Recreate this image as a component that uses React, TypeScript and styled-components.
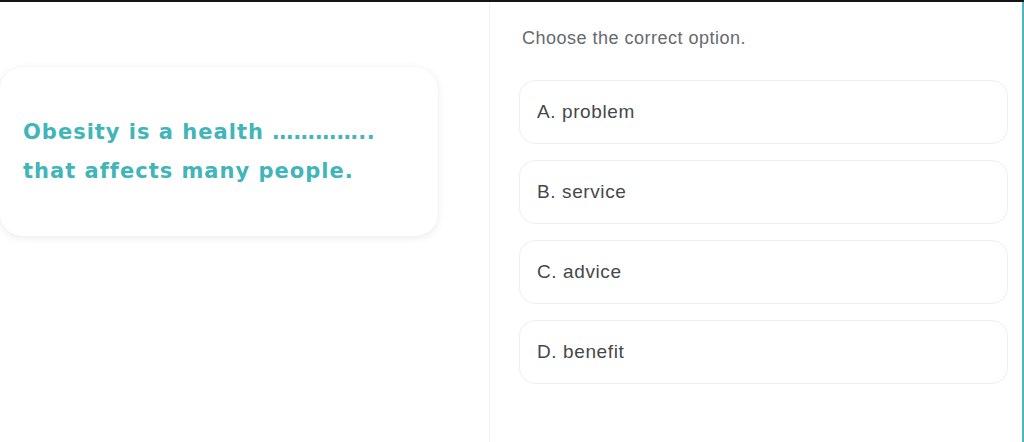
import styled, { createGlobalStyle } from "styled-components";

const GlobalStyle = createGlobalStyle`
  html, body {
    margin: 0;
    padding: 0;
    background: #ffffff;
  }
  body {
    font-family: "Liberation Sans", Arial, sans-serif;
  }
`;

const Screen = styled.div`
  width: 1024px;
  height: 442px;
  box-sizing: border-box;
  border-top: 2px solid #141414;
  display: flex;
  overflow: hidden;
  background: #fff;
`;

const QuestionPane = styled.div`
  width: 490px;
  flex-shrink: 0;
  box-sizing: border-box;
  border-right: 1px solid #f1f2f3;
  padding-top: 65px;
`;

const QuestionCard = styled.div`
  width: 438px;
  height: 169px;
  box-sizing: border-box;
  border-radius: 22px;
  background: #fff;
  box-shadow: 0 2px 8px rgba(0, 0, 0, 0.08), 0 0 1px rgba(0, 0, 0, 0.06);
  padding: 0 23px;
  display: flex;
  align-items: center;
`;

const QuestionText = styled.p`
  margin: 0;
  font-family: "DejaVu Sans", Verdana, sans-serif;
  font-weight: 700;
  font-size: 21px;
  line-height: 39px;
  letter-spacing: 1px;
  color: #41b5b9;
`;

const Blank = styled.span`
  letter-spacing: 0.5px;
`;

const AnswerPane = styled.div`
  flex: 1;
  box-sizing: border-box;
  padding: 23px 14px 0 29px;
  border-right: 2px solid #4cb8bd;
  display: flex;
  flex-direction: column;
`;

const Prompt = styled.div`
  font-size: 18px;
  line-height: 26px;
  letter-spacing: 0.5px;
  color: #666a6e;
  margin-left: 3px;
  margin-bottom: 29px;
`;

const OptionList = styled.div`
  display: flex;
  flex-direction: column;
  gap: 16px;
`;

const Option = styled.button`
  height: 64px;
  box-sizing: border-box;
  border: 1px solid #eceeef;
  border-radius: 16px;
  background: #fff;
  padding: 0 17px;
  text-align: left;
  font-family: "Liberation Sans", Arial, sans-serif;
  font-size: 19px;
  letter-spacing: 0.6px;
  color: #45484c;
  cursor: pointer;
`;

const options = ["A. problem", "B. service", "C. advice", "D. benefit"];

export default function App() {
  return (
    <>
      <GlobalStyle />
      <Screen>
        <QuestionPane>
          <QuestionCard>
            <QuestionText>
              Obesity is a health <Blank>…………..</Blank>
              <br />
              that affects many people.
            </QuestionText>
          </QuestionCard>
        </QuestionPane>
        <AnswerPane>
          <Prompt>Choose the correct option.</Prompt>
          <OptionList>
            {options.map((o) => (
              <Option key={o}>{o}</Option>
            ))}
          </OptionList>
        </AnswerPane>
      </Screen>
    </>
  );
}
